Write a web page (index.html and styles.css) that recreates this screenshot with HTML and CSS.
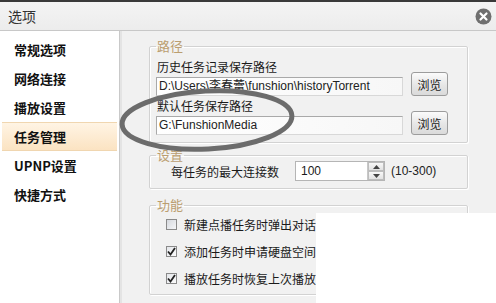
FILE: index.html
```html
<!DOCTYPE html>
<html>
<head>
    <title>选项</title>
    <link rel="stylesheet" href="styles.css">
</head>
<body>
    <div class="window">
        <div class="titlebar">
            <span class="title">选项</span>
            <span class="close">
                <svg width="17" height="17" viewBox="0 0 17 17">
                    <circle cx="8.5" cy="8.5" r="8" fill="#6f6f6f"/>
                    <path d="M5.5 5.5 L11.5 11.5 M11.5 5.5 L5.5 11.5" stroke="#fff" stroke-width="2.2" stroke-linecap="round"/>
                </svg>
            </span>
        </div>
        <div class="main">
            <ul class="sidebar">
                <li>常规选项</li>
                <li>网络连接</li>
                <li>播放设置</li>
                <li class="active">任务管理</li>
                <li>UPNP设置</li>
                <li>快捷方式</li>
            </ul>
            <div class="content">
                <fieldset class="group path-group">
                    <legend>路径</legend>
                    <div class="label">历史任务记录保存路径</div>
                    <div class="path-row">
                        <div class="path-input">D:\Users\李春蕾\funshion\historyTorrent</div>
                        <button class="browse">浏览</button>
                    </div>
                    <div class="label">默认任务保存路径</div>
                    <div class="path-row">
                        <div class="path-input">G:\FunshionMedia</div>
                        <button class="browse">浏览</button>
                    </div>
                </fieldset>

                <fieldset class="group settings-group">
                    <legend>设置</legend>
                    <div class="spin-row">
                        <span class="spin-label">每任务的最大连接数</span>
                        <div class="spinner">
                            <span class="spin-value">100</span>
                            <span class="spin-buttons">
                                <span class="spin-up"><svg width="7" height="4" viewBox="0 0 7 4"><path d="M0 4 L3.5 0 L7 4Z" fill="#444"/></svg></span>
                                <span class="spin-down"><svg width="7" height="4" viewBox="0 0 7 4"><path d="M0 0 L3.5 4 L7 0Z" fill="#444"/></svg></span>
                            </span>
                        </div>
                        <span class="spin-range">(10-300)</span>
                    </div>
                </fieldset>

                <fieldset class="group feature-group">
                    <legend>功能</legend>
                    <div class="check-row">
                        <span class="checkbox"></span>
                        <span>新建点播任务时弹出对话</span>
                    </div>
                    <div class="check-row">
                        <span class="checkbox checked">
                            <svg width="9" height="9" viewBox="0 0 9 9"><path d="M1 4.5 L3.5 7.5 L8 1" stroke="#222" stroke-width="1.8" fill="none"/></svg>
                        </span>
                        <span>添加任务时申请硬盘空间</span>
                    </div>
                    <div class="check-row">
                        <span class="checkbox checked">
                            <svg width="9" height="9" viewBox="0 0 9 9"><path d="M1 4.5 L3.5 7.5 L8 1" stroke="#222" stroke-width="1.8" fill="none"/></svg>
                        </span>
                        <span>播放任务时恢复上次播放</span>
                    </div>
                </fieldset>
            </div>
        </div>

        <!-- cropped-away corner of the photo -->
        <div class="blank-corner"></div>

        <!-- hand-drawn marker circle -->
        <svg class="marker" width="496" height="303" viewBox="0 0 496 303">
            <ellipse cx="207" cy="120" rx="85" ry="29" fill="none" stroke="#6c6c6c" stroke-width="5" transform="rotate(-3 207 120)"/>
        </svg>
    </div>
</body>
</html>
```

FILE: styles.css
```css
html, body {
    margin: 0;
    padding: 0;
}
body {
    font-family: "Noto Sans CJK SC", "Liberation Sans", sans-serif;
    font-size: 12px;
    color: #1a1a1a;
    background: #f1f1f1;
}
.window {
    position: relative;
    width: 496px;
    height: 303px;
    overflow: hidden;
    display: flex;
    flex-direction: column;
    background: #f1f1f1;
}
.titlebar {
    height: 28px;
    border-top: 2px solid #3a3a3a;
    border-bottom: 1px solid #c8c8c8;
    background: linear-gradient(#f4f4f4, #ececec);
    display: flex;
    align-items: center;
    justify-content: space-between;
    padding: 0 4px 0 8px;
    flex-shrink: 0;
}
.title {
    font-size: 14px;
    color: #333;
    line-height: 16px;
}
.close {
    display: flex;
    margin-top: 1px;
}
.main {
    flex: 1;
    display: flex;
}
.sidebar {
    list-style: none;
    margin: 0;
    padding: 4px 2px 0 2px;
    width: 116px;
    background: #fff;
    border-right: 1px solid #c9c9c9;
}
.sidebar li {
    height: 29px;
    line-height: 29px;
    padding-left: 12px;
    font-size: 13px;
    font-weight: bold;
    color: #111;
    box-sizing: border-box;
}
.sidebar li.active {
    background: linear-gradient(#fff4e4, #fbe3c2);
    border-top: 1px solid #f0d6b0;
    border-bottom: 1px solid #f0d6b0;
    line-height: 27px;
}
.content {
    flex: 1;
    border-left: 2px solid #e4e4e4;
    padding: 9px 28px 0 27px;
}
.group {
    margin: 0;
    border: 1px solid #d2d2d2;
    box-shadow: inset 1px 1px 0 #fff, 1px 1px 0 #fff;
    border-radius: 2px;
    padding: 0 0 0 6px;
}
.group legend {
    color: #bb9e70;
    font-size: 13px;
    line-height: 12px;
    padding: 0 1px;
    margin-left: 0;
}
.path-group {
    padding: 8px 19px 7px 6px;
}
.label {
    line-height: 14px;
    padding-left: 1px;
}
.path-row {
    display: flex;
    align-items: center;
    height: 24px;
    margin-top: -2px;
}
.path-row + .label {
    margin-top: 3px;
}
.path-input {
    width: 243px;
    height: 17px;
    line-height: 17px;
    border: 1px solid #a9a9a9;
    border-right-color: #d8d8d8;
    border-bottom-color: #d8d8d8;
    background: linear-gradient(90deg, #fff, #f7f7f7);
    padding-left: 2px;
    font-family: "Liberation Sans", "Noto Sans CJK SC", sans-serif;
    font-size: 12px;
    color: #222;
    margin-top: 4px;
}
.browse {
    margin-left: 8px;
    width: 37px;
    height: 24px;
    padding: 0;
    border: 1px solid #9c9c9c;
    border-radius: 3px;
    background: linear-gradient(#fbfbfb, #e6e6e6 55%, #dadada);
    font-family: "Noto Sans CJK SC", sans-serif;
    font-size: 12px;
    color: #222;
}
.settings-group {
    margin-top: 6px;
    padding-bottom: 7px;
}
.spin-row {
    display: flex;
    align-items: center;
    height: 20px;
    padding-left: 15px;
}
.spin-label {
    width: 124px;
}
.spinner {
    width: 88px;
    height: 18px;
    border: 1px solid #b5b5b5;
    background: #fff;
    display: flex;
    justify-content: space-between;
}
.spin-value {
    font-family: "Liberation Sans", sans-serif;
    padding-left: 5px;
    line-height: 18px;
}
.spin-buttons {
    width: 16px;
    display: flex;
    flex-direction: column;
    border-left: 1px solid #c8c8c8;
}
.spin-up, .spin-down {
    flex: 1;
    display: flex;
    align-items: center;
    justify-content: center;
    background: linear-gradient(#f8f8f8, #e2e2e2);
    border: 1px solid #bdbdbd;
}
.spin-range {
    margin-left: 6px;
    font-family: "Liberation Sans", sans-serif;
    font-size: 12px;
    color: #222;
}
.feature-group {
    margin-top: 10px;
    padding-bottom: 2px;
}
.check-row {
    display: flex;
    align-items: center;
    height: 27px;
    padding-left: 10px;
    white-space: nowrap;
}
.checkbox {
    width: 11px;
    height: 11px;
    box-sizing: border-box;
    border: 1px solid #8a8a8a;
    background: linear-gradient(135deg, #d5d8dd, #f5f6f8);
    margin-right: 7px;
    display: flex;
    align-items: center;
    justify-content: center;
}
.checkbox.checked {
    background: linear-gradient(135deg, #e4e6ea, #fbfbfb);
}
.blank-corner {
    position: absolute;
    left: 316px;
    top: 213px;
    right: 0;
    bottom: 0;
    background: #fff;
}
.marker {
    position: absolute;
    left: 0;
    top: 0;
    pointer-events: none;
}
```
